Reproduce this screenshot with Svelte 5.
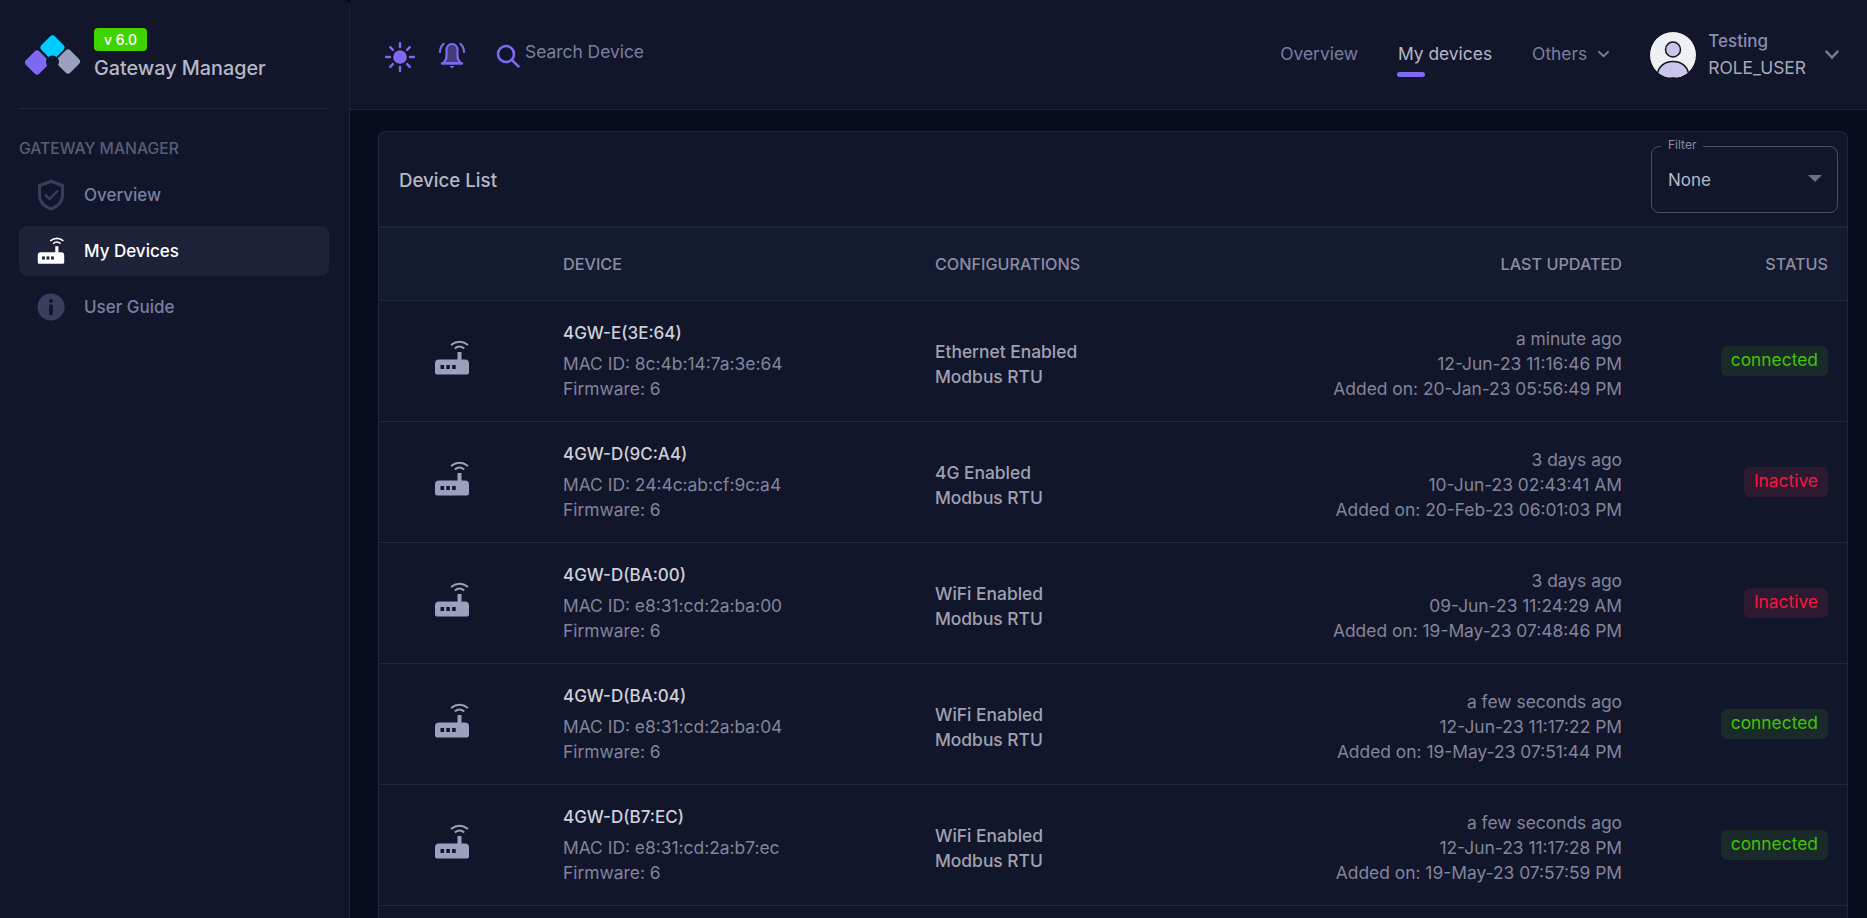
<script>
  const rows = [
    { name: '4GW-E(3E:64)', mac: '8c:4b:14:7a:3e:64', conn: 'Ethernet Enabled', ago: 'a minute ago', at: '12-Jun-23 11:16:46 PM', added: '20-Jan-23 05:56:49 PM', status: 'connected' },
    { name: '4GW-D(9C:A4)', mac: '24:4c:ab:cf:9c:a4', conn: '4G Enabled', ago: '3 days ago', at: '10-Jun-23 02:43:41 AM', added: '20-Feb-23 06:01:03 PM', status: 'Inactive' },
    { name: '4GW-D(BA:00)', mac: 'e8:31:cd:2a:ba:00', conn: 'WiFi Enabled', ago: '3 days ago', at: '09-Jun-23 11:24:29 AM', added: '19-May-23 07:48:46 PM', status: 'Inactive' },
    { name: '4GW-D(BA:04)', mac: 'e8:31:cd:2a:ba:04', conn: 'WiFi Enabled', ago: 'a few seconds ago', at: '12-Jun-23 11:17:22 PM', added: '19-May-23 07:51:44 PM', status: 'connected' },
    { name: '4GW-D(B7:EC)', mac: 'e8:31:cd:2a:b7:ec', conn: 'WiFi Enabled', ago: 'a few seconds ago', at: '12-Jun-23 11:17:28 PM', added: '19-May-23 07:57:59 PM', status: 'connected' }
  ];
</script>

{#snippet router(cls)}
  <svg class={cls} viewBox="0 0 36 36" fill="none">
    <path d="M3 34.500a2 2 0 0 1-2-2V23.500a4 4 0 0 1 4-4h18.500V12h4v7.500H31a4 4 0 0 1 4 4v9a2 2 0 0 1-2 2z" fill="currentColor"/>
    <rect x="6.500" y="25" width="3.600" height="4" fill="var(--hole)"/>
    <rect x="12.300" y="25" width="3.600" height="4" fill="var(--hole)"/>
    <rect x="18.100" y="25" width="3.600" height="4" fill="var(--hole)"/>
    <path d="M20.800 8.500Q25.500 4.500 30.200 8.500M17 5Q25.500-1.500 34 5" stroke="currentColor" stroke-width="2"/>
  </svg>
{/snippet}

{#snippet chevron(cls)}
  <svg class={cls} viewBox="0 0 14 9" fill="none" preserveAspectRatio="none"><path d="M1.500 1.500 7 7l5.500-5.500" stroke="currentColor" stroke-width="2"/></svg>
{/snippet}

<div class="app">
  <aside class="sidebar">
    <div class="brand">
      <svg class="logo" viewBox="0 0 56 42">
        <rect x="2.500" y="18" width="19" height="19" rx="3.500" transform="rotate(45 12 27.500)" fill="#8069f2"/>
        <rect x="33.500" y="17" width="19" height="19" rx="3.500" transform="rotate(45 43 26.500)" fill="#9c9fbd"/>
        <rect x="18" y="3" width="19" height="19" rx="3.500" transform="rotate(45 27.500 12.500)" fill="#00ccff"/>
        <circle cx="27.500" cy="27" r="6.500" fill="#11162b"/>
      </svg>
      <div class="brand-text">
        <span class="version">v 6.0</span>
        <span class="brand-name">Gateway Manager</span>
      </div>
    </div>
    <div class="divider"></div>
    <div class="section">GATEWAY MANAGER</div>
    <nav class="side-nav">
      <a class="side-item">
        <svg class="side-icon" viewBox="0 0 28 32" fill="none">
          <path d="M14 .5 27 5.500v10.500c0 7.500-5 13-13 15.500C6 29 1 23.500 1 16V5.500z" fill="#3a3e5c"/>
          <path d="M14 4 24 7.800v8.200c0 5.800-3.800 10-10 12.200C7.800 26 4 21.800 4 16V7.800z" fill="#11162b"/>
          <path d="m8 15.500 4.500 4.500L21 11.500" stroke="#3a3e5c" stroke-width="2.400"/>
        </svg>
        <span>Overview</span>
      </a>
      <a class="side-item active">
        {@render router('side-icon router-white')}
        <span>My Devices</span>
      </a>
      <a class="side-item">
        <svg class="side-icon" viewBox="0 0 30 30">
          <circle cx="15" cy="15" r="14.500" fill="#3a3e5c"/>
          <circle cx="15" cy="8.500" r="2.100" fill="#11162b"/>
          <rect x="13" y="12.500" width="4" height="11" fill="#11162b"/>
        </svg>
        <span>User Guide</span>
      </a>
    </nav>
  </aside>

  <div class="content">
    <header class="topbar">
      <div class="tools">
        <svg class="sun" viewBox="0 0 30 30" fill="none">
          <circle cx="15" cy="15" r="6.800" fill="#8069f2"/>
          <path d="M15 1v4M15 25v4M1 15h4M25 15h4M5.200 5.200l2.700 2.700M22.100 22.100l2.700 2.700M24.800 5.200l-2.700 2.700M7.900 22.100l-2.700 2.700" stroke="#8069f2" stroke-width="2.400" stroke-linecap="round"/>
        </svg>
        <svg class="bell" viewBox="0 0 28 28" fill="none">
          <path d="M14 3c-3.500 0-5.500 3-5.500 6.500V15c0 3-1 5-3 7h17c-2-2-3-4-3-7V9.500C19.500 6 17.500 3 14 3z" fill="#433c78" stroke="#8069f2" stroke-width="2.200"/>
          <path d="M4 22.500h20" stroke="#8069f2" stroke-width="2.400" stroke-linecap="round"/>
          <path d="M11.500 25h5L14 27.500z" fill="#8069f2"/>
          <path d="M2 11c0-3 1.200-6 3.500-8M26 11c0-3-1.200-6-3.500-8" stroke="#8069f2" stroke-width="2.200" stroke-linecap="round"/>
        </svg>
        <div class="search">
          <svg class="search-icon" viewBox="0 0 24 24" fill="none">
            <circle cx="10" cy="10" r="8" stroke="#8069f2" stroke-width="2.600"/>
            <path d="m15.800 15.800 7.400 7.400" stroke="#8069f2" stroke-width="2.600"/>
          </svg>
          <span>Search Device</span>
        </div>
      </div>

      <nav class="top-nav">
        <a class="top-link">Overview</a>
        <a class="top-link current">My devices</a>
        <a class="top-link others">Others {@render chevron('chev-sm')}</a>
      </nav>

      <div class="user">
        <svg class="avatar" viewBox="0 0 48 48">
          <defs><clipPath id="avatar-clip"><circle cx="24" cy="24" r="23"/></clipPath></defs>
          <circle cx="24" cy="24" r="23.500" fill="#eef1f3" stroke="#0a0a0e" stroke-width="1"/>
          <g clip-path="url(#avatar-clip)">
            <circle cx="24" cy="18.500" r="7.500" fill="#c9c6ee" stroke="#14141c" stroke-width="1.500"/>
            <path d="M8 47c0-11 7-16.500 16-16.500S40 36 40 47z" fill="#c9c6ee" stroke="#14141c" stroke-width="1.500"/>
          </g>
        </svg>
        <div class="user-text">
          <span class="user-name">Testing</span>
          <span class="user-role">ROLE_USER</span>
        </div>
        {@render chevron('chev-lg')}
      </div>
    </header>

    <main class="main">
      <section class="card">
        <div class="card-head">
          <h2>Device List</h2>
          <div class="filter">
            <label>Filter</label>
            <span>None</span>
            <i class="caret"></i>
          </div>
        </div>

        <div class="grid head-row">
          <span></span>
          <span>DEVICE</span>
          <span>CONFIGURATIONS</span>
          <span class="right">LAST UPDATED</span>
          <span class="right">STATUS</span>
        </div>

        {#each rows as r}
          <div class="grid row">
            <div class="cell-icon">{@render router('row-icon')}</div>
            <div class="device">
              <div class="dev-name">{r.name}</div>
              <div>MAC ID: {r.mac}</div>
              <div>Firmware: 6</div>
            </div>
            <div class="config">
              <div>{r.conn}</div>
              <div>Modbus RTU</div>
            </div>
            <div class="updated right">
              <div>{r.ago}</div>
              <div>{r.at}</div>
              <div>Added on: {r.added}</div>
            </div>
            <div class="right">
              <span class="pill" class:ok={r.status === 'connected'} class:bad={r.status !== 'connected'}>{r.status}</span>
            </div>
          </div>
        {/each}
        <div class="grid row"></div>
      </section>
    </main>
  </div>
</div>

<style>
  :global(body) {
    margin: 0;
    background: #090c1f;
    font-family: Inter, "Liberation Sans", sans-serif;
    font-size: 16px;
    overflow: hidden;
  }
  a { text-decoration: none; color: inherit; }
  .app {
    display: grid;
    grid-template-columns: 350px 1fr;
    height: 918px;
    overflow: hidden;
    background: #090c1f;
  }
  .sidebar {
    box-sizing: border-box;
    height: 100%;
    background: #11162b;
    border-right: 1px solid #1f2439;
    border-top-right-radius: 8px;
    padding: 0 20px 0 19px;
  }
  .brand {
    box-sizing: border-box;
    display: flex;
    align-items: flex-start;
    gap: 15px;
    height: 108px;
    padding-top: 28px;
  }
  .logo { width: 56px; height: 42px; margin: 7px 0 0 6px; flex: none; }
  .brand-text { display: flex; flex-direction: column; align-items: flex-start; margin-left: -2px; }
  .version {
    background: #3fd400;
    color: #fff;
    font-size: 14px;
    font-weight: 500;
    line-height: 23px;
    height: 23px;
    padding: 0 10px;
    border-radius: 4px;
  }
  .brand-name {
    margin-top: 3px;
    font-size: 19.800px;
    font-weight: 500;
    line-height: 28px;
    color: #b7b8c6;
  }
  .divider { height: 1px; background: #23273e; }
  .section {
    margin-top: 30px;
    font-size: 15.700px;
    line-height: 20px;
    font-weight: 500;
    color: #5a5d75;
  }
  .side-nav { display: flex; flex-direction: column; margin-top: 11px; gap: 6px; }
  .side-item {
    display: flex;
    align-items: center;
    height: 50px;
    border-radius: 8px;
    padding-left: 18px;
    gap: 19px;
    font-size: 17px;
    font-weight: 500;
    color: #7b7f9f;
  }
  .side-item.active { background: #1e2238; color: #fff; --hole: #1e2238; }
  .side-icon { width: 28px; height: 32px; flex: none; }
  .router-white { color: #fff; }
  .content { display: flex; flex-direction: column; min-width: 0; }
  .topbar {
    box-sizing: border-box;
    flex: none;
    height: 110px;
    background: #11162b;
    border-bottom: 1px solid #1f2439;
    display: flex;
    align-items: center;
    padding: 0 27px 0 35px;
    color: #7b7f9f;
  }
  .tools { display: flex; align-items: center; }
  .sun { width: 30px; height: 30px; margin-top: 4px; }
  .bell { width: 28px; height: 28px; margin-left: 23px; }
  .search { display: flex; align-items: center; margin-left: 30px; gap: 5px; font-size: 17.400px; color: #7b7f9f; }
  .search span { position: relative; top: -3px; }
  .search-icon { width: 24px; height: 24px; margin-top: 3px; }
  .top-nav { margin-left: auto; display: flex; align-items: center; gap: 40px; font-size: 17.400px; position: relative; top: -1px; }
  .top-link { position: relative; display: flex; align-items: center; line-height: 24px; }
  .current { color: #b7b8c6; }
  .current::after {
    content: "";
    position: absolute;
    left: -1px;
    top: 30px;
    width: 28px;
    height: 5px;
    border-radius: 3px;
    background: #8069f2;
  }
  .others { gap: 10px; }
  .chev-sm { width: 13px; height: 8px; }
  .user { display: flex; align-items: center; margin-left: 39px; }
  .avatar { width: 48px; height: 48px; flex: none; }
  .user-text { display: flex; flex-direction: column; margin-left: 11px; gap: 3px; }
  .user-name { font-size: 17px; line-height: 24px; font-weight: 500; color: #8a8db0; }
  .user-role { font-size: 17.400px; line-height: 24px; color: #a9aab8; }
  .chev-lg { width: 16px; height: 11px; margin-left: 18px; color: #7b7f9f; }
  .main { flex: 1; padding: 21px 19px 0 28px; min-height: 0; }
  .card {
    border: 1px solid #23273e;
    border-bottom: 0;
    border-radius: 8px 8px 0 0;
    background: #11162b;
    overflow: hidden;
  }
  .card-head {
    box-sizing: border-box;
    height: 96px;
    display: flex;
    align-items: center;
    justify-content: space-between;
    padding: 0 9px 0 20px;
    border-bottom: 2px solid #1f2439;
  }
  h2 { margin: 2px 0 0; font-size: 18.700px; font-weight: 500; color: #b7b8c6; }
  .filter {
    box-sizing: border-box;
    position: relative;
    width: 187px;
    height: 67px;
    padding: 0 16px;
    border: 1px solid #4a4e66;
    border-radius: 8px;
    display: flex;
    align-items: center;
    color: #b7b8c6;
    font-size: 17px;
  }
  label {
    position: absolute;
    left: 9px;
    top: -9px;
    font-size: 12px;
    line-height: 14px;
    padding: 0 7px;
    color: #8a8c9f;
    background: #11162b;
  }
  .filter span { position: relative; top: 1px; }
  .caret {
    position: absolute;
    right: 15px;
    top: 28px;
    border-left: 7.500px solid transparent;
    border-right: 7.500px solid transparent;
    border-top: 7px solid #6f7080;
  }
  .grid {
    box-sizing: border-box;
    display: grid;
    grid-template-columns: 184px 372px 1fr 360px 206px;
    padding-right: 19px;
    border-bottom: 1px solid #23273e;
  }
  .right { text-align: right; }
  .head-row {
    height: 73px;
    align-items: center;
    background: #141a30;
    font-size: 16.200px;
    font-weight: 500;
    color: #8c8da0;
  }
  .row {
    --hole: #11162b;
    height: 121px;
    font-size: 17.400px;
    line-height: 25px;
    color: #83849a;
  }
  .cell-icon { box-sizing: border-box; display: flex; justify-content: center; align-items: center; padding-right: 38px; padding-bottom: 6px; }
  .row-icon { width: 36px; height: 36px; color: #9c9fbd; }
  .device { padding-top: 20px; }
  .dev-name { font-size: 17px; font-weight: 500; color: #cfd0da; margin-bottom: 5px; }
  .config { padding-top: 38px; color: #a0a1b2; font-weight: 500; }
  .updated { padding-top: 25px; }
  .pill {
    display: inline-block;
    margin-top: 45px;
    height: 30px;
    line-height: 28px;
    padding: 0 10px;
    border-radius: 6px;
  }
  .ok { background: #1a2a2b; color: #3fc404; }
  .bad { background: #2d1a30; color: #f5173f; }
</style>
